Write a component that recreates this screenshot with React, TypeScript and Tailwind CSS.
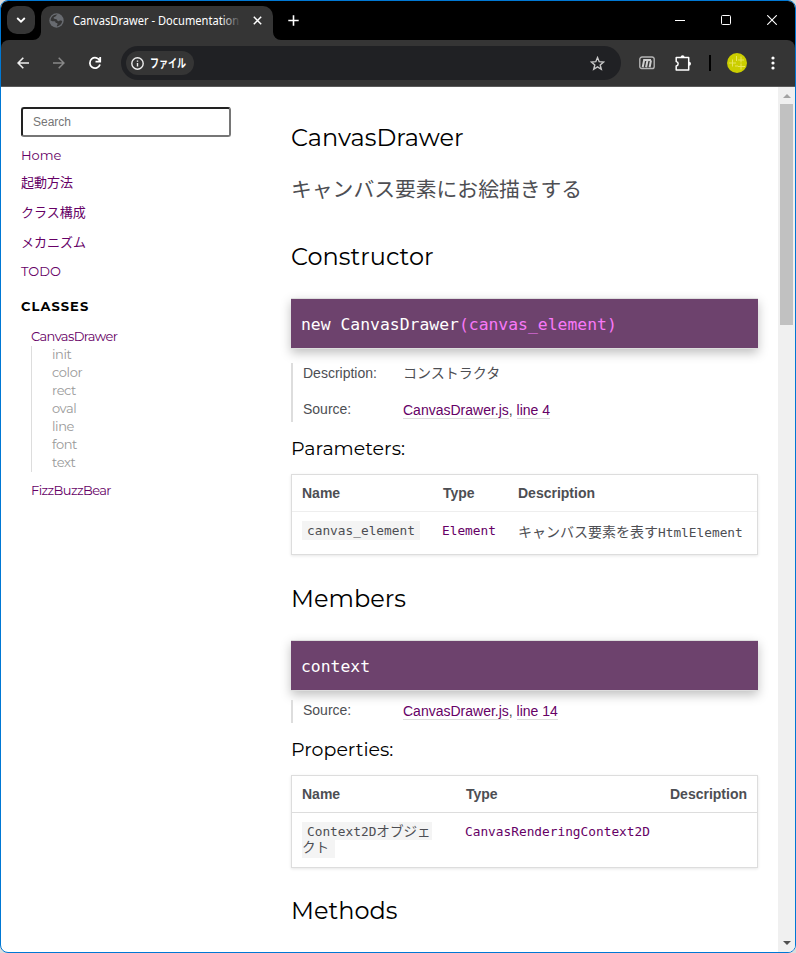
import type { ReactNode } from "react";

const display = "font-['Montserrat','Inter','Noto_Sans_CJK_JP',sans-serif]";
const mono = "font-['Consolas','DejaVu_Sans_Mono','Noto_Sans_CJK_JP',monospace]";

function Heading({ children, className }: { children: ReactNode; className: string }) {
  return (
    <h2 className={`flex items-center whitespace-nowrap text-[24px] font-normal text-black ${display} ${className}`}>
      {children}
    </h2>
  );
}

function Signature({ children }: { children: ReactNode }) {
  return (
    <h4
      className={`flex h-[51px] items-center whitespace-pre border-y border-[#ddd] bg-[#6d426d] pl-[10px] pt-[3px] text-[16.4px] text-white shadow-[0_4px_10px_rgba(0,0,0,0.25)] ${mono}`}
    >
      {children}
    </h4>
  );
}

function SourceLink({ line }: { line: string }) {
  return (
    <dd className="whitespace-pre pt-px leading-[16px] text-[#4d4e53]">
      <a className="border-b border-[#ddd] text-[#606]">CanvasDrawer.js</a>, <a className="border-b border-[#ddd] text-[#606]">{line}</a>
    </dd>
  );
}

function TabStrip() {
  return (
    <div className="flex h-[39px] shrink-0 bg-black">
      <div className="ml-[6px] mt-[5px] flex h-7 w-7 items-center justify-center rounded-[10px] bg-[#353535]">
        <svg width="10" height="8" viewBox="0 0 10 8" fill="none" stroke="#fff" strokeWidth="1.8"><path d="M1.2 2l3.8 3.7L8.8 2" /></svg>
      </div>
      <div className="relative ml-[6px] mt-[5px] flex h-[34px] w-[232px] items-center rounded-t-[10px] bg-[#353535] pb-[5px]">
        <svg className="absolute -left-2 bottom-0" width="8" height="8"><path d="M8 0v8H0a8 8 0 0 0 8-8z" fill="#353535" /></svg>
        <svg className="absolute -right-2 bottom-0" width="8" height="8"><path d="M0 0v8h8a8 8 0 0 1-8-8z" fill="#353535" /></svg>
        <svg className="ml-[8px] shrink-0" width="15" height="15" viewBox="0 0 15 15">
          <circle cx="7.5" cy="7.5" r="7.2" fill="#686b70" />
          <path d="M8.600 1.500C7 2 7.300 3.400 6 3.700S4 5 5.300 5.800 8 5.600 8.300 7.300 10 8 11 7.600s2 0 2.200.6C12.700 11 10.500 13 8 13.400c-.8-.8 1-1.700.6-2.600S6.500 10.500 6.600 9.500 5.500 8.200 4.200 8.300 2.200 7.500 1.700 7.800C1.500 4 5 1 8.600 1.500z" fill="#353535" />
        </svg>
        <div className="relative ml-[9px] w-[168px] whitespace-nowrap font-['Noto_Sans',sans-serif] text-[12px] leading-[18px] text-white">
          <span className="inline-block origin-left scale-x-[0.925]">CanvasDrawer - Documentation</span>
          <div className="absolute inset-y-0 right-0 w-5 bg-linear-to-r from-transparent to-[#353535]" />
        </div>
        <svg className="ml-[12px]" width="9" height="9" viewBox="0 0 9 9" stroke="#fff" strokeWidth="1.5"><path d="M.8.8l7.400 7.400M8.200.8L.8 8.200" /></svg>
      </div>
      <svg className="ml-[15px] mt-[14px]" width="11" height="11" stroke="#fff" strokeWidth="1.600"><path d="M5.500.3v10.400M.3 5.500h10.400" /></svg>
      <svg className="ml-auto mt-[18px]" width="10" height="3" fill="#fff"><path d="M0 1h10v1H0z" /></svg>
      <svg className="ml-9 mt-[14px]" width="10" height="10" fill="none" stroke="#fff"><rect x=".5" y=".5" width="9" height="9" rx="1" /></svg>
      <svg className="ml-9 mr-[18px] mt-[14px]" width="10" height="10" stroke="#fff" strokeWidth="1.100"><path d="M.2.2l9.600 9.600M9.800.2L.2 9.800" /></svg>
    </div>
  );
}

function Toolbar() {
  return (
    <div className="bg-black">
      <div className="flex h-[47px] items-center rounded-t-[8px] border-b border-[#5a5a5a] bg-[#353535]">
        <svg className="ml-4" width="12" height="12" viewBox="0 0 12 12" fill="none" stroke="#eee" strokeWidth="1.600"><path d="M12 6H1.200M6.300.8L1.100 6l5.200 5.200" /></svg>
        <svg className="ml-6" width="12" height="12" viewBox="0 0 12 12" fill="none" stroke="#888" strokeWidth="1.500"><path d="M0 6h10.800M5.700.8L10.900 6l-5.200 5.200" /></svg>
        <svg className="ml-[23px]" width="14" height="14" viewBox="0 0 14 14" fill="none" stroke="#fff" strokeWidth="1.800"><path d="M11.800 4.800A5.200 5.200 0 1 0 12 8.500M12.200 1v4.700H7.500" /></svg>
        <div className="ml-[19px] flex h-[34px] w-[500px] items-center rounded-full bg-[#202124] pl-[5px] pr-4">
          <div className="flex h-6 w-[68px] items-center rounded-full bg-[#353535] pl-[5px]">
            <svg width="13" height="13" viewBox="0 0 13 13" fill="none" stroke="#eee" strokeWidth="1.400"><circle cx="6.500" cy="6.500" r="5.700" /><path d="M6.500 6v3.500M6.500 3.400v1.300" /></svg>
            <span className="ml-[6px] inline-block w-[36px] origin-left scale-x-[0.75] whitespace-nowrap font-['Noto_Sans_CJK_JP',sans-serif] text-[12px] font-bold text-white">ファイル</span>
          </div>
          <svg className="ml-auto" width="15" height="15" viewBox="0 0 15 15" fill="none" stroke="#c7c7c7" strokeWidth="1.400"><path d="M7.500 1.600l1.700 4.100 4.400.3-3.400 2.900 1.100 4.400-3.800-2.400-3.800 2.400 1.100-4.400L1.400 6l4.400-.3z" /></svg>
        </div>
        <svg className="ml-[18px]" width="16" height="14" viewBox="0 0 16 14" fill="none">
          <path d="M3.200 1h10a2 2 0 0 1 2 2.200v7.400a2 2 0 0 1-2 1.900H2.700a2 2 0 0 1-1.900-2.200V3.400A2.300 2.300 0 0 1 3.200 1z" stroke="#b4b4b4" strokeWidth="1.400" />
          <path d="M3.700 11.200l1.500-7.400M7.100 11.200l1.400-7M10.600 11.200l1.400-7M4.200 4.100h7.800" stroke="#cfcfcf" strokeWidth="2" />
        </svg>
        <svg className="ml-5" width="18" height="17" viewBox="0 0 18 17" fill="none" stroke="#fff" strokeWidth="1.500"><path d="M1.200 2.500h12.500v12.400H1.200v-3.900c2.600-.4 2.600-4.200 0-4.600z" strokeLinejoin="round" /><path d="M5.600 2.200a2 2 0 0 1 4 0zM14 6.800a2 2 0 0 1 0 4z" fill="#fff" stroke="none" /></svg>
        <div className="ml-[16px] h-4 w-[2px] bg-black" />
        <svg className="ml-4" width="20" height="20" viewBox="0 0 20 20">
          <circle cx="10" cy="10" r="10" fill="#cbce00" />
          <path d="M2 10h7M5.500 6.500v7M11 7h6M14 3.500v6M11 13.500h7M14 10.500v6M8 13h3M9.500 3v5" stroke="#e8e55b" strokeWidth="1" />
        </svg>
        <svg className="ml-[24px]" width="4" height="14" fill="#fff"><circle cx="2" cy="2" r="1.600" /><circle cx="2" cy="7" r="1.600" /><circle cx="2" cy="12" r="1.600" /></svg>
      </div>
    </div>
  );
}

function Sidebar() {
  const methods = ["init", "color", "rect", "oval", "line", "font", "text"];
  return (
    <nav className={`w-[290px] shrink-0 whitespace-nowrap pl-5 pt-5 text-[13px] text-[#606] ${display}`}>
      <div className="flex h-[30px] w-[210px] items-center rounded-[3px] border-2 border-b-[#767676] border-l-[#222] border-r-[#767676] border-t-[#222] pl-[10px] font-['Liberation_Sans',sans-serif] text-[12px] text-[#757575]">
        Search
      </div>
      <div className="mt-[8px] h-5 leading-5">Home</div>
      <div className="mt-[7px] h-5 leading-5">起動方法</div>
      <div className="mt-[10px] h-5 leading-5">クラス構成</div>
      <div className="mt-[10px] h-5 leading-5">メカニズム</div>
      <div className="mt-[9px] h-5 leading-5">TODO</div>
      <h3 className="mt-[15px] h-5 leading-5 font-bold tracking-[1.050px] text-black">CLASSES</h3>
      <div className="pl-[10px] tracking-[-0.600px]">
        <div className="mt-[10px] h-5 leading-5">CanvasDrawer</div>
        <ul className="border-l border-[#ddd] pl-5 tracking-[-0.400px] text-[#999]">
          {methods.map((m) => (
            <li key={m} className="h-[18px] leading-[17px]">{m}</li>
          ))}
        </ul>
        <div className="mt-[8px] h-5 leading-5">FizzBuzzBear</div>
      </div>
    </nav>
  );
}

function Main() {
  return (
    <main className="w-[467px] shrink-0 font-['Liberation_Sans','Noto_Sans_CJK_JP',sans-serif] text-[14px] text-[#4d4e53]">
      <Heading className="mt-[31px] h-10">CanvasDrawer</Heading>
      <p className="mt-[10px] h-10 whitespace-nowrap font-['Noto_Sans_CJK_JP',sans-serif] text-[20.800px] leading-10">キャンバス要素にお絵描きする</p>
      <Heading className="mb-[21px] mt-[29px] h-10">Constructor</Heading>
      <Signature>new CanvasDrawer<span className="text-[#f878f8]">(canvas_element)</span></Signature>
      <dl className="mt-[14px] grid h-[59px] grid-cols-[100px_1fr] content-start gap-y-[20px] border-l-2 border-[#ddd] pl-[10px] leading-4">
        <dt className="pt-[2px]">Description:</dt>
        <dd className="whitespace-nowrap pt-[2px]">コンストラクタ</dd>
        <dt>Source:</dt>
        <SourceLink line="line 4" />
      </dl>
      <h5 className={`mt-[12px] h-[30px] whitespace-nowrap text-[19px] leading-[30px] text-black ${display}`}>Parameters:</h5>
      <div className="mt-[10px] h-[81px] border border-[#ddd] shadow-[0_1px_3px_rgba(0,0,0,0.1)]">
        <div className="grid h-[37px] grid-cols-[141px_75px_1fr] items-center border-b border-[#eee] pl-[10px] font-bold">
          <span>Name</span><span>Type</span><span>Description</span>
        </div>
        <div className={`grid h-[37px] grid-cols-[141px_75px_1fr] items-center whitespace-nowrap pl-[10px] text-[12.800px] ${mono}`}>
          <span><code className={`inline-block h-[19px] bg-[#f4f4f4] px-[5px] leading-[19px] ${mono}`}>canvas_element</code></span>
          <span className="-ml-px text-[#606]">Element</span>
          <span className="pt-[3px]"><span className="text-[14px]">キャンバス要素を表す</span>HtmlElement</span>
        </div>
      </div>
      <Heading className="mb-[21px] mt-[24px] h-10">Members</Heading>
      <Signature>context</Signature>
      <dl className="mt-[9px] grid h-[23px] grid-cols-[100px_1fr] content-start border-l-2 border-[#ddd] pl-[10px] pt-[2px] leading-4">
        <dt>Source:</dt>
        <SourceLink line="line 14" />
      </dl>
      <h5 className={`mt-[12px] h-[30px] whitespace-nowrap text-[19px] leading-[30px] text-black ${display}`}>Properties:</h5>
      <div className="mt-[10px] h-[93px] border border-[#ddd] shadow-[0_1px_3px_rgba(0,0,0,0.1)]">
        <div className="grid h-[37px] grid-cols-[164px_204px_1fr] items-center border-b border-[#ddd] pl-[10px] font-bold">
          <span>Name</span><span>Type</span><span>Description</span>
        </div>
        <div className={`grid grid-cols-[164px_204px_1fr] whitespace-nowrap pl-[10px] pt-[9px] text-[12.800px] leading-[17px] ${mono}`}>
          <code className={mono}>
            <span className="block h-[18px] w-[130px] bg-[#f4f4f4] pl-[5px] leading-[19px]">Context2D<span className="text-[13.600px]">オブジェ</span></span>
            <span className="block h-[18px] w-[33px] bg-[#f4f4f4] text-[13.600px] leading-[15px]">クト</span>
          </code>
          <span className="-ml-px pt-px text-[#606]">CanvasRenderingContext2D</span>
        </div>
      </div>
      <Heading className="mt-[23px] h-10">Methods</Heading>
    </main>
  );
}

export default function App() {
  return (
    <div className="h-[953px] w-[796px] bg-[#ddd]">
      <div className="flex h-full flex-col overflow-hidden rounded-[8px] border border-[#0078d4] bg-white">
        <TabStrip />
        <Toolbar />
        <div className="flex min-h-0 flex-1">
          <Sidebar />
          <Main />
          <div className="ml-auto flex w-[17px] shrink-0 flex-col items-center bg-[#f0f0f0]">
            <svg className="mt-[7px] shrink-0" width="8" height="4" fill="#a3a3a3"><path d="M0 4l4-4 4 4z" /></svg>
            <div className="mt-[6px] h-[221px] w-[13px] shrink-0 bg-[#c1c1c1]" />
            <svg className="mb-[7px] mt-auto shrink-0" width="8" height="4" fill="#505050"><path d="M0 0l4 4 4-4z" /></svg>
          </div>
        </div>
      </div>
    </div>
  );
}
